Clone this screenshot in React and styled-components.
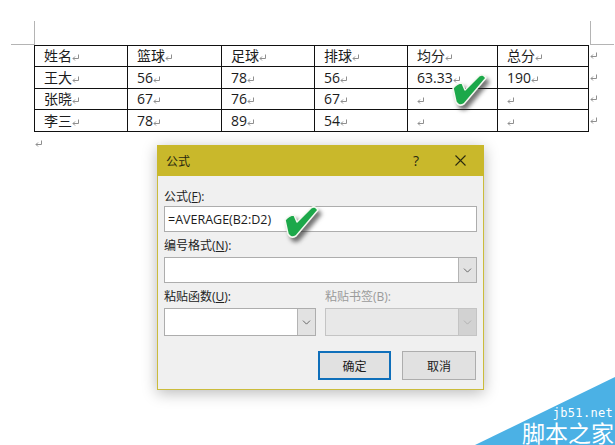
import styled, { createGlobalStyle } from 'styled-components';
import { ChevronDown } from 'lucide-react';

const GlobalStyle = createGlobalStyle`
  html, body {
    margin: 0;
    padding: 0;
    background: #fff;
  }
`;

const Page = styled.div`
  position: relative;
  width: 615px;
  height: 445px;
  overflow: hidden;
  background: #fff;
  font-family: "Open Sans", "Noto Sans CJK SC", sans-serif;
  color: #1c1c1c;
`;

const MarginMarks = styled.div`
  display: flex;
  justify-content: space-between;
  height: 45px;
  padding: 21px 1px 0 11px;
  box-sizing: border-box;
`;

const CropMark = styled.div`
  width: 23px;
  height: 23px;
  border-bottom: 1px solid #b4b4b4;
  border-${(p) => (p.$right ? 'left' : 'right')}: 1px solid #b4b4b4;
`;

const Sheet = styled.table`
  border-collapse: collapse;
  table-layout: fixed;
  width: 574px;
  margin-left: 34px;
`;

const Row = styled.tr`
  height: ${(p) => p.$height}px;
`;

const Cell = styled.td`
  width: ${(p) => p.$width}px;
  padding: 0 0 0 9px;
  box-sizing: border-box;
  border: 1px solid #111;
  font-size: 14px;
  line-height: 20px;
  white-space: nowrap;
`;

const RowEnd = styled.td`
  padding: 0 0 0 1px;
  border: none;
  line-height: 0;
`;

const ParagraphRow = styled.div`
  height: 13px;
  padding: 8px 0 0 35px;
  box-sizing: border-box;
  line-height: 0;
`;

const Mark = styled.svg`
  width: 8px;
  height: 8px;
  vertical-align: -1px;
  fill: none;
  stroke: #8f8f8f;
  stroke-width: 1;
`;

const Dialog = styled.div`
  width: 327px;
  height: 245px;
  margin-left: 157px;
  box-sizing: border-box;
  background: #f0f0f0;
  border: 1px solid #cbbc3c;
  border-top: none;
  box-shadow: 0 3px 14px rgba(0, 0, 0, 0.28);
`;

const TitleBar = styled.div`
  display: flex;
  align-items: center;
  height: 31px;
  padding-left: 9px;
  margin: 0 -1px;
  background: #c9b82b;
  font-size: 12px;
  color: #2a2a10;
`;

const TitleText = styled.span`
  flex: 1;
`;

const HelpButton = styled.span`
  width: 28px;
  margin-right: 25px;
  text-align: center;
  font-size: 14px;
`;

const CloseButton = styled.svg`
  width: 11px;
  height: 11px;
  margin-right: 18px;
  stroke: #2a2a10;
  stroke-width: 1.1;
`;

const Body = styled.div`
  padding: 10px 6px 0;
`;

const Label = styled.div`
  height: ${(p) => p.$height}px;
  display: flex;
  align-items: center;
  font-size: 12px;
  color: ${(p) => (p.$disabled ? '#9a9a9a' : '#222')};
`;

const Input = styled.div`
  display: flex;
  align-items: center;
  height: 26px;
  padding-left: 3px;
  box-sizing: border-box;
  background: #fff;
  border: 1px solid #adadad;
  font-size: 12.5px;
`;

const Select = styled.div`
  display: flex;
  justify-content: flex-end;
  height: ${(p) => p.$height}px;
  box-sizing: border-box;
  background: ${(p) => (p.$disabled ? '#e8e8e8' : '#fff')};
  border: 1px solid ${(p) => (p.$disabled ? '#c4c4c4' : '#adadad')};
`;

const SelectArrow = styled.div`
  display: flex;
  align-items: center;
  justify-content: center;
  width: 17px;
  background: ${(p) => (p.$disabled ? '#d2d2d2' : '#e2e2e2')};
  border-left: 1px solid ${(p) => (p.$disabled ? '#c4c4c4' : '#b4b4b4')};
  color: ${(p) => (p.$disabled ? '#a8a8a8' : '#444')};
`;

const PasteGrid = styled.div`
  display: grid;
  grid-template-columns: 152px 152px;
  column-gap: 9px;
`;

const Buttons = styled.div`
  display: flex;
  justify-content: flex-end;
  gap: 11px;
  margin-top: 15px;
  padding-right: 1px;
`;

const Button = styled.div`
  display: flex;
  align-items: center;
  justify-content: center;
  width: ${(p) => p.$width}px;
  height: 29px;
  box-sizing: border-box;
  background: #e1e1e1;
  border: ${(p) => (p.$primary ? '2px solid #0f6fba' : '1px solid #adadad')};
  font-size: 12px;
`;

const Check = styled.svg`
  position: absolute;
  left: ${(p) => p.$x}px;
  top: ${(p) => p.$y}px;
  width: 36px;
  height: 34px;
  overflow: visible;
  filter: drop-shadow(3px 4px 2px rgba(40, 40, 40, 0.65));
`;

const Watermark = styled.div`
  position: absolute;
  right: 0;
  bottom: 0;
  width: 140px;
  height: 68px;
  background: #4bb1e5;
  clip-path: polygon(100% 0, 100% 100%, 0 100%);
  color: #fff;
`;

const WatermarkUrl = styled.div`
  position: absolute;
  right: 2px;
  top: 29px;
  font-family: "DejaVu Sans Mono", monospace;
  font-size: 12px;
  line-height: 14px;
  letter-spacing: 0.3px;
`;

const WatermarkName = styled.div`
  position: absolute;
  right: 1px;
  bottom: 1px;
  font-family: "Noto Sans CJK SC", sans-serif;
  font-size: 23px;
  line-height: 23px;
`;

const columns = [93, 94, 93, 93, 90, 91];

const rows = [
  { height: 21, cells: ['姓名', '篮球', '足球', '排球', '均分', '总分'] },
  { height: 22, cells: ['王大', '56', '78', '56', '63.33', '190'] },
  { height: 21, cells: ['张晓', '67', '76', '67', '', ''] },
  { height: 22, cells: ['李三', '78', '89', '54', '', ''] },
];

function ReturnMark() {
  return (
    <Mark viewBox="0 0 8 8">
      <path d="M6.5 0.5V4.5H1M3 2.5L1 4.5l2 2" />
    </Mark>
  );
}

function GreenCheck({ x, y }) {
  return (
    <Check $x={x} $y={y} viewBox="0 0 36 34">
      <path
        d="M1 15 Q5 10 10 10 L13 17 L27 3 Q31 0 34 5 L12 31 Q7 34 4 29 Z"
        fill="#1ca84a"
        stroke="#f4f8f0"
        strokeWidth="1.5"
        strokeLinejoin="round"
      />
    </Check>
  );
}

function Arrow({ disabled }) {
  return (
    <SelectArrow $disabled={disabled}>
      <ChevronDown size={13} strokeWidth={1.4} />
    </SelectArrow>
  );
}

export default function App() {
  return (
    <Page>
      <GlobalStyle />
      <MarginMarks>
        <CropMark />
        <CropMark $right />
      </MarginMarks>

      <Sheet>
        <tbody>
          {rows.map((row) => (
            <Row key={row.cells[0]} $height={row.height}>
              {row.cells.map((text, i) => (
                <Cell key={i} $width={columns[i]}>
                  {text}
                  <ReturnMark />
                </Cell>
              ))}
              <RowEnd>
                <ReturnMark />
              </RowEnd>
            </Row>
          ))}
        </tbody>
      </Sheet>
      <ParagraphRow>
        <ReturnMark />
      </ParagraphRow>

      <Dialog>
        <TitleBar>
          <TitleText>公式</TitleText>
          <HelpButton>?</HelpButton>
          <CloseButton viewBox="0 0 11 11">
            <path d="M0.5 0.5L10.5 10.5M10.5 0.5L0.5 10.5" />
          </CloseButton>
        </TitleBar>
        <Body>
          <Label $height={20}>
            <span>公式(<u>F</u>):</span>
          </Label>
          <Input>=AVERAGE(B2:D2)</Input>
          <Label $height={25}>
            <span>编号格式(<u>N</u>):</span>
          </Label>
          <Select $height={26}>
            <Arrow />
          </Select>
          <PasteGrid>
            <Label $height={25}>
              <span>粘贴函数(<u>U</u>):</span>
            </Label>
            <Label $height={25} $disabled>
              <span>粘贴书签(B):</span>
            </Label>
            <Select $height={28}>
              <Arrow />
            </Select>
            <Select $height={28} $disabled>
              <Arrow disabled />
            </Select>
          </PasteGrid>
          <Buttons>
            <Button $primary $width={73}>确定</Button>
            <Button $width={74}>取消</Button>
          </Buttons>
        </Body>
      </Dialog>

      <GreenCheck x={452} y={73} />
      <GreenCheck x={284} y={205} />

      <Watermark>
        <WatermarkUrl>jb51.net</WatermarkUrl>
        <WatermarkName>脚本之家</WatermarkName>
      </Watermark>
    </Page>
  );
}
